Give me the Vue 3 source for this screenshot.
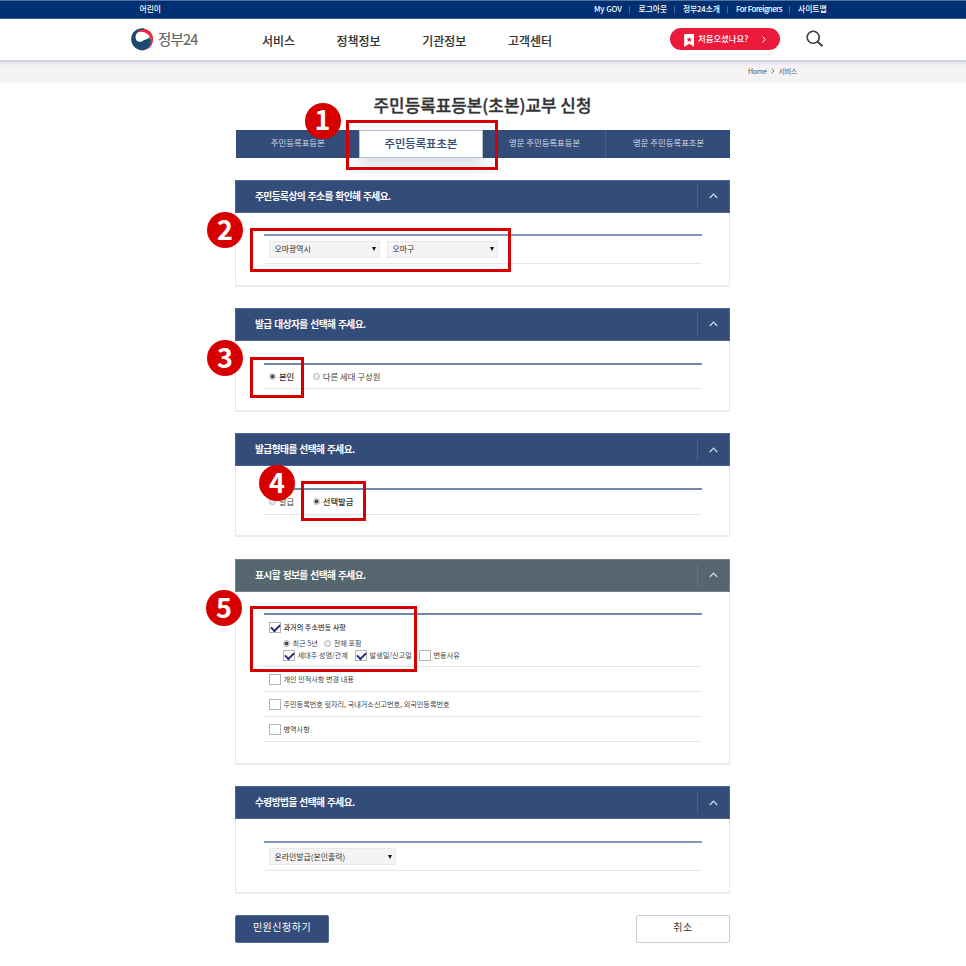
<script setup>
const topLinks = ['My GOV', '로그아웃', '정부24소개', 'For Foreigners', '사이트맵']
const menu = ['서비스', '정책정보', '기관정보', '고객센터']
const tabs = ['주민등록표등본', '주민등록표초본', '영문 주민등록표등본', '영문 주민등록표초본']
const sections = [
  { id: 'address', title: '주민등록상의 주소를 확인해 주세요.' },
  { id: 'person', title: '발급 대상자를 선택해 주세요.' },
  { id: 'form', title: '발급형태를 선택해 주세요.' },
  { id: 'info', title: '표시할 정보를 선택해 주세요.' },
  { id: 'receive', title: '수령방법을 선택해 주세요.' },
]
const extra = ['개인 인적사항 변경 내용', '주민등록번호 뒷자리, 국내거소신고번호, 외국인등록번호', '병역사항']
</script>

<template>
  <div class="page">
    <div class="topbar">
      <span class="kids">어린이</span>
      <nav class="toplinks">
        <span v-for="(l, i) in topLinks" :key="l" :class="['tl', 'tl' + i]">{{ l }}</span>
      </nav>
    </div>
    <header class="header">
      <div class="brand">
        <svg class="emblem" viewBox="0 0 24 24">
          <path d="M4.500 4.200C8.500-.2 16-.6 20.200 4C24.800 9.200 24 17.600 17 22.800C21 17.800 22 11.600 18.300 7.200C14.600 3.200 9 3 4.500 4.200Z" fill="#ee2b47" />
          <path d="M14.500 .700C8-.8 1.800 3.200 .4 9.200C-1 16.500 4.200 23.200 11.500 23.400C16 23.500 19.800 20.500 20.600 16.500C21.200 13.500 20.600 11.500 19.400 9.600C18.200 11.600 16 11.400 13.800 12.400C11.800 13.400 10.500 14.800 8.300 14.300C5.600 13.700 4.300 11 4.900 8.200C5.500 5.200 8.200 2.700 11.600 1.900Z" fill="#1d4a6e" />
          <path d="M6 4.800C9.500 2 14.600 2.300 17.800 6" fill="none" stroke="#ee2b47" stroke-width="1.200" />
        </svg>
        <span>정부24</span>
      </div>
      <nav class="menu"><span v-for="m in menu" :key="m">{{ m }}</span></nav>
      <div class="first">
        <svg class="mark" viewBox="0 0 11 14"><path d="M0 0H11V14L5.500 10.500L0 14Z" fill="#fff" /><path d="M5.500 3L6.300 5.100L8.500 5.200L6.800 6.500L7.400 8.700L5.500 7.400L3.600 8.700L4.200 6.500L2.500 5.200L4.700 5.100Z" fill="#ec1b3b" /></svg>
        <span>처음오셨나요?</span>
        <svg class="go" viewBox="0 0 4 7"><path d="M.6.600L3.300 3.500L.6 6.400" fill="none" stroke="#fff" /></svg>
      </div>
      <svg class="search" viewBox="0 0 18 18"><circle cx="7.200" cy="7.200" r="6" fill="none" stroke="#3a3a3a" stroke-width="1.600" /><path d="M11.600 11.600L16.500 16.200" stroke="#3a3a3a" stroke-width="1.900" /></svg>
    </header>
    <div class="crumbs">
      <span>Home</span>
      <svg viewBox="0 0 4 6"><path d="M.7.600L3 3L.7 5.400" fill="none" stroke="#555" stroke-width=".8" /></svg>
      <span>서비스</span>
    </div>

    <main class="main">
      <h1>주민등록표등본(초본)교부 신청</h1>
      <div class="tabs">
        <div v-for="(t, i) in tabs" :key="t" class="tab" :class="{ active: i === 1 }">{{ t }}</div>
      </div>

      <section v-for="s in sections" :key="s.id" class="card" :class="s.id">
        <div class="bar">
          <h2>{{ s.title }}</h2>
          <div class="fold"><svg viewBox="0 0 9 6"><path d="M.8 5L4.500 1.200L8.200 5" fill="none" stroke="#d5dce9" stroke-width="1.200" /></svg></div>
        </div>
        <div class="body">
          <div v-if="s.id === 'address'" class="row">
            <div class="select"><span>오마광역시</span><i></i></div>
            <div class="select"><span>오마구</span><i></i></div>
          </div>
          <div v-else-if="s.id === 'person'" class="row">
            <b class="radio on"></b><span class="opt strong">본인</span>
            <b class="radio second"></b><span class="opt">다른 세대 구성원</span>
          </div>
          <div v-else-if="s.id === 'form'" class="row">
            <b class="radio"></b><span class="opt">발급</span>
            <b class="radio on second"></b><span class="opt strong">선택발급</span>
          </div>
          <template v-else-if="s.id === 'info'">
            <div class="row history">
              <div class="line"><b class="check on"></b><span class="strong up">과거의 주소변동 사항</span></div>
              <div class="line periods">
                <b class="radio on"></b><span>최근 5년</span>
                <b class="radio all"></b><span>전체 포함</span>
              </div>
              <div class="line details">
                <div><b class="check on"></b><span class="up">세대주 성명/관계</span></div>
                <div><b class="check on"></b><span class="up">발생일/신고일</span></div>
                <div><b class="check"></b><span class="up">변동사유</span></div>
              </div>
            </div>
            <div v-for="e in extra" :key="e" class="row small"><b class="check"></b><span class="up">{{ e }}</span></div>
          </template>
          <div v-else class="row">
            <div class="select wide"><span>온라인발급(본인출력)</span><i></i></div>
          </div>
        </div>
      </section>

      <div class="actions">
        <button class="apply">민원신청하기</button>
        <button class="cancel">취소</button>
      </div>
    </main>

    <div v-for="n in 5" :key="'f' + n" :class="['frame', 'frame' + n]"></div>
    <div v-for="n in 5" :key="'n' + n" :class="['num', 'num' + n]">{{ n }}</div>
  </div>
</template>

<style>
body { background: #fff; }
</style>

<style scoped>
* { box-sizing: border-box; }
.page { position: relative; height: 966px; overflow: hidden; font-family: "Noto Sans CJK KR", "Noto Sans", sans-serif; color: #444; white-space: nowrap; }
.topbar { height: 19px; background: #002f72; border-top: 1px solid #50709f; border-bottom: 1px solid #3b5f94; color: #fff; display: flex; justify-content: space-between; padding: 0 139.500px; line-height: 15.500px; font-size: 7.800px; font-weight: 500; }
.toplinks { display: flex; }
.tl { position: relative; }
.tl0 { width: 44.500px; letter-spacing: -.1px; }
.tl1 { width: 44.500px; }
.tl2 { width: 53px; letter-spacing: -.15px; }
.tl3 { width: 62px; letter-spacing: -.55px; }
.tl4 { width: 28.500px; }
.tl:not(.tl4)::after { content: ""; position: absolute; right: 8.500px; top: 5px; width: 1px; height: 7px; background: #45679a; }
.header { height: 41px; display: flex; align-items: center; padding: 0 0 1px 130.500px; }
.brand { display: flex; align-items: center; width: 131.500px; font-size: 14.500px; color: #666; letter-spacing: -.85px; line-height: 20px; -webkit-text-stroke: .2px #666; }
.emblem { width: 23px; height: 23px; margin-right: 4.500px; }
.brand span { padding-bottom: 1px; }
.menu { display: flex; font-size: 12px; font-weight: 500; color: #333; line-height: 20px; width: 407.500px; padding-top: 3px; -webkit-text-stroke: .1px #333; }
.menu span { width: 85.700px; }
.menu span:first-child { width: 74.500px; }
.first { width: 110px; height: 22px; border-radius: 11px; background: #ec1b3b; color: #fff; display: flex; align-items: center; padding-left: 14px; font-size: 8.400px; font-weight: 500; line-height: 20px; }
.mark { width: 10.500px; height: 13px; margin-right: 4px; margin-top: 2px; }
.first span { width: 64px; padding-bottom: 2px; }
.go { width: 4px; height: 7px; }
.search { width: 18px; height: 18px; margin-left: 26px; }
.crumbs { height: 22px; border-top: 2px solid #ccd3e3; border-bottom: 1px solid #eee; background: linear-gradient(#e5e5ee, #f5f3f4 4px); display: flex; align-items: center; padding: 0 0 2px 748px; font-size: 7px; letter-spacing: -.3px; line-height: 18px; color: #555; }
.crumbs svg { width: 4px; height: 6px; margin: 1px 4px 0 4px; }
.main { width: 495px; margin-left: 235px; }
h1 { margin: 0; height: 48px; padding-top: 10px; text-align: center; font-size: 16.900px; line-height: 26px; font-weight: 500; color: #333; -webkit-text-stroke: .35px #333; }
.tabs { display: grid; grid-template-columns: repeat(4, 1fr); height: 27.500px; background: #344c79; margin-left: .5px; }
.tab { color: #d3dae7; font-size: 8.400px; line-height: 25px; text-align: center; padding-left: 1px; }
.tab:nth-child(3) { border-right: 1px solid #4a618c; }
.tab.active { background: #fff; border: 1px solid #b5c2da; color: #344c79; font-size: 11.300px; line-height: 24px; font-weight: 500; padding: 0; -webkit-text-stroke: .15px #344c79; box-shadow: 0 7px 14px rgba(60, 75, 115, .2); }
.card { border: 1px solid #e9e9e9; border-top: 0; border-bottom: 2px solid #ececec; margin-top: 21.300px; height: 104px; }
.card.address { height: 107.200px; }
.card.info { height: 206.600px; }
.card.receive { height: 107.500px; }
.tabs + .card { margin-top: 22px; }
.bar { height: 33px; margin: 0 -1px; background: #344c79; border: 1px solid #4c6490; display: flex; justify-content: space-between; align-items: center; padding-left: 19px; }
.info .bar { background: #56666f; border-color: #718089; }
h2 { margin: 0; font-size: 9.700px; letter-spacing: -.55px; word-spacing: .9px; line-height: 20px; padding-bottom: 1px; font-weight: 700; color: #fff; }
.fold { width: 32.500px; height: 22px; border-left: 1px solid #4a618c; display: flex; align-items: center; justify-content: center; }
.info .fold { border-color: #67767e; }
.fold svg { width: 9px; height: 6px; margin-left: 1px; }
.body { margin: 21.900px 27px 0 28px; border-top: 2px solid #7389ac; }
.address .body { margin-top: 21px; }
.info .body { margin-top: 21.500px; }
.address .body, .receive .body { border-color: #8297b5; }
.row { display: flex; align-items: center; height: 28px; padding-left: 5px; border-bottom: 1px solid #e6e6e6; font-size: 8.400px; }
.person .row, .form .row { height: 24.500px; }
.select { width: 110.500px; height: 17px; background: #f4f4f4; border: 1px solid #e9e9e9; display: flex; align-items: center; justify-content: space-between; padding: 0 3px 0 4.500px; font-size: 7.900px; line-height: 15px; color: #333; margin-right: 7.500px; }
.select.wide { width: 126.500px; }
.select span { padding-bottom: 1px; }
.select i { border: 2.200px solid transparent; border-top: 4px solid #111; border-bottom: 0; }
.radio { width: 7px; height: 7px; flex: none; border-radius: 50%; border: 1px solid #b5b5b5; background: #eee; margin-right: 2.500px; }
.radio.on { background: radial-gradient(circle, #444 0 1.400px, #ddd 2.200px); }
.radio.second { margin-left: 18.500px; }
.person .row .radio, .form .row .radio { margin-right: 2.900px; }
.opt { line-height: 20px; padding-bottom: 1.500px; }
.strong { font-weight: 500; color: #333; }
.row.history { display: block; height: 52.300px; padding-top: 6.500px; font-size: 7.150px; }
.line { display: flex; align-items: center; height: 12px; line-height: 12px; }
.up { padding-bottom: 1.500px; }
.periods { margin-top: 3.500px; padding-left: 14px; }
.periods .all { margin-left: 6.500px; }
.details { padding-left: 14px; height: 12.500px; }
.details div { display: flex; align-items: center; }
.details div:nth-child(1) { width: 72px; }
.details div:nth-child(2) { width: 64px; }
.check { width: 11.500px; height: 11.500px; flex: none; border: 1px solid #b5b5b5; background: #fff; margin-right: 3px; position: relative; }
.check.on::after { content: ""; position: absolute; left: 1.300px; top: 1px; width: 7px; height: 4px; border-left: 2px solid #232c83; border-bottom: 2px solid #232c83; transform: rotate(-45deg); }
.row.small { height: 25px; font-size: 7.130px; line-height: 20px; }
.actions { display: flex; justify-content: space-between; margin-top: 21px; }
button { width: 94px; height: 28px; border-radius: 2px; font-family: inherit; font-size: 10px; letter-spacing: .5px; padding: 0 0 4px; line-height: 20px; }
.apply { background: #344c79; border: 1px solid #526a95; color: #fff; }
.cancel { background: #fff; border: 1px solid #ccc; color: #333; }
.frame { position: absolute; border: 3px solid #d60000; }
.frame1 { left: 345.500px; top: 120px; width: 152.500px; height: 49.500px; }
.frame2 { left: 250px; top: 227.500px; width: 260.500px; height: 44px; }
.frame3 { left: 250px; top: 356.500px; width: 54px; height: 41px; }
.frame4 { left: 301px; top: 481px; width: 64.500px; height: 40px; }
.frame5 { left: 250px; top: 606px; width: 167px; height: 66px; }
.num { position: absolute; width: 36px; height: 36px; border-radius: 50%; background: #d60000; color: #fff; font-size: 27px; font-weight: 700; line-height: 33px; text-align: center; }
.num1 { left: 304.500px; top: 103.200px; line-height: 32px; }
.num2 { left: 207px; top: 212px; }
.num3 { left: 207px; top: 340px; }
.num4 { left: 259px; top: 465px; }
.num5 { left: 206px; top: 589.700px; }
</style>
